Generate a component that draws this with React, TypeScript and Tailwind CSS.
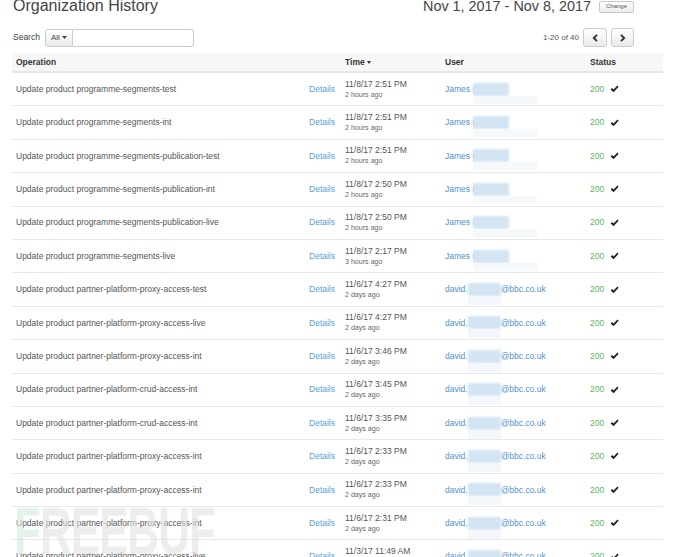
import React from "react";

type Row = { op: string; time: string; ago: string; user: "james" | "david" };

const rows: Row[] = [
  { op: "programme-segments-test", time: "11/8/17 2:51 PM", ago: "2 hours ago", user: "james" },
  { op: "programme-segments-int", time: "11/8/17 2:51 PM", ago: "2 hours ago", user: "james" },
  { op: "programme-segments-publication-test", time: "11/8/17 2:51 PM", ago: "2 hours ago", user: "james" },
  { op: "programme-segments-publication-int", time: "11/8/17 2:50 PM", ago: "2 hours ago", user: "james" },
  { op: "programme-segments-publication-live", time: "11/8/17 2:50 PM", ago: "2 hours ago", user: "james" },
  { op: "programme-segments-live", time: "11/8/17 2:17 PM", ago: "3 hours ago", user: "james" },
  { op: "partner-platform-proxy-access-test", time: "11/6/17 4:27 PM", ago: "2 days ago", user: "david" },
  { op: "partner-platform-proxy-access-live", time: "11/6/17 4:27 PM", ago: "2 days ago", user: "david" },
  { op: "partner-platform-proxy-access-int", time: "11/6/17 3:46 PM", ago: "2 days ago", user: "david" },
  { op: "partner-platform-crud-access-int", time: "11/6/17 3:45 PM", ago: "2 days ago", user: "david" },
  { op: "partner-platform-crud-access-int", time: "11/6/17 3:35 PM", ago: "2 days ago", user: "david" },
  { op: "partner-platform-proxy-access-int", time: "11/6/17 2:33 PM", ago: "2 days ago", user: "david" },
  { op: "partner-platform-proxy-access-int", time: "11/6/17 2:33 PM", ago: "2 days ago", user: "david" },
  { op: "partner-platform-proxy-access-int", time: "11/6/17 2:31 PM", ago: "2 days ago", user: "david" },
  { op: "partner-platform-proxy-access-live", time: "11/3/17 11:49 AM", ago: "5 days ago", user: "david" },
  { op: "partner-platform-proxy-access-test", time: "11/3/17 11:48 AM", ago: "5 days ago", user: "david" },
];

function Check() {
  return (
    <svg width="9" height="8" viewBox="0 0 9 8" className="ml-[6px]">
      <path d="M0.6 4.4 L2.2 3.0 L3.6 4.6 L7.4 0.6 L8.6 1.8 L3.6 7.2 Z" fill="#222" />
    </svg>
  );
}

function Chevron({ dir }: { dir: "l" | "r" }) {
  return (
    <svg width="7" height="8" viewBox="0 0 7 8">
      {dir === "l" ? (
        <path d="M5 0.8 L1.8 4 L5 7.2" stroke="#333" strokeWidth="1.9" fill="none" />
      ) : (
        <path d="M2 0.8 L5.2 4 L2 7.2" stroke="#333" strokeWidth="1.9" fill="none" />
      )}
    </svg>
  );
}

function User({ u }: { u: Row["user"] }) {
  if (u === "james") {
    return (
      <span className="flex items-center text-[#4f92cc]">
        <span>James (</span>
        <span className="relative inline-block w-[36px] h-[13px] ml-[-2px]">
          <span className="absolute inset-0 bg-[#d3e5f3] blur-[1px]" />
          <span className="absolute left-[0px] top-[13px] w-[64px] h-[8px] bg-[#f6f9fc]" />
        </span>
      </span>
    );
  }
  return (
    <span className="flex items-center text-[#4f92cc]">
      <span>david.</span>
      <span className="relative inline-block w-[33px] h-[13px]">
        <span className="absolute inset-0 bg-[#d3e5f3] blur-[1px]" />
        <span className="absolute left-[0px] top-[13px] w-[33px] h-[9px] bg-[#f3f7fb]" />
      </span>
      <span>@bbc.co.uk</span>
    </span>
  );
}

export default function App() {
  return (
    <div className="relative w-[690px] h-[557px] overflow-hidden bg-white font-['Liberation_Sans',Arial,sans-serif] text-[#555]">
      <div className="pl-[12px]">
        {/* Title row */}
        <div className="w-[622px] h-[20px] mt-[-4px] flex items-center justify-between">
          <div className="pl-[1px] text-[16px] leading-[20px] text-[#444]">Organization History</div>
          <div className="flex items-center">
            <span className="text-[14.4px] leading-[20px] text-[#444]">Nov 1, 2017 - Nov 8, 2017</span>
            <span className="ml-[8px] mt-[1px] h-[12px] w-[35px] flex items-center justify-center rounded-[2px] border border-[#c8c8c8] bg-gradient-to-b from-white to-[#ececec] text-[6px] text-[#555]">
              Change
            </span>
          </div>
        </div>

        {/* Search row */}
        <div className="w-[622px] mt-[12px] h-[19px] flex items-center justify-between">
          <div className="flex items-center pl-[1px]">
            <span className="text-[8.5px] text-[#444]">Search</span>
            <div className="ml-[5px] flex h-[18px]">
              <span className="w-[28px] flex items-center justify-center gap-[2px] border border-[#ccc] rounded-l-[3px] bg-gradient-to-b from-white to-[#ebebeb] text-[8px] text-[#444]">
                All
                <svg width="5" height="3" viewBox="0 0 5 3">
                  <path d="M0 0 L5 0 L2.5 3 Z" fill="#444" />
                </svg>
              </span>
              <span className="w-[121px] border border-l-0 border-[#ccc] rounded-r-[3px] bg-white" />
            </div>
          </div>
          <div className="flex items-center">
            <span className="text-[8px] text-[#555] mr-[4px]">1-20 of 40</span>
            <span className="w-[24px] h-[19px] flex items-center justify-center border border-[#ccc] rounded-[3px] bg-gradient-to-b from-white to-[#ebebeb]">
              <Chevron dir="l" />
            </span>
            <span className="ml-[4px] w-[23px] h-[19px] flex items-center justify-center border border-[#ccc] rounded-[3px] bg-gradient-to-b from-white to-[#ebebeb]">
              <Chevron dir="r" />
            </span>
          </div>
        </div>

        {/* Table */}
        <div className="w-[651px] mt-[6px]">
          <div className="flex h-[20px] items-center bg-[#f7f7f7] border-b-2 border-[#e6e6e6] text-[8.5px] font-bold text-[#333]">
            <div className="w-[329px] pl-[4px]">Operation</div>
            <div className="w-[100px] pl-[4px] flex items-center gap-[2px]">
              Time
              <svg width="4" height="3" viewBox="0 0 4 3">
                <path d="M0 0 L4 0 L2 3 Z" fill="#333" />
              </svg>
            </div>
            <div className="w-[145px] pl-[4px]">User</div>
            <div className="flex-1 pl-[4px]">Status</div>
          </div>
          {rows.map((r, i) => (
            <div key={i} className="flex h-[33.4px] items-center border-b border-[#e8e8e8] text-[8.5px]">
              <div className="w-[329px] pl-[4px] pr-[6px] flex items-center justify-between">
                <span className="text-[#555]">Update product {r.op}</span>
                <span className="text-[#55a2dc]">Details</span>
              </div>
              <div className="w-[100px] pl-[4px] flex flex-col">
                <span className="text-[8.5px] leading-[12px] text-[#555]">{r.time}</span>
                <span className="text-[7.1px] leading-[11px] text-[#666]">{r.ago}</span>
              </div>
              <div className="w-[145px] pl-[4px]">
                <User u={r.user} />
              </div>
              <div className="flex-1 pl-[4px] flex items-center">
                <span className="text-[#5cb85c]">200</span>
                <Check />
              </div>
            </div>
          ))}
        </div>
      </div>

      {/* Watermark */}
      <div className="pointer-events-none absolute left-[14px] top-[498px] opacity-60">
        <span className="inline-block origin-top scale-y-150 text-[44px] leading-none font-bold tracking-[-1px] text-[#e2e2e2]">
          <span className="text-[#d5ebdc]">F</span>REEBUF
        </span>
      </div>
    </div>
  );
}
